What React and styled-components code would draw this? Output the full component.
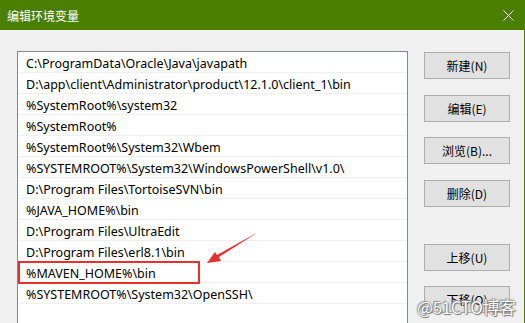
import React from 'react';
import styled, {createGlobalStyle} from 'styled-components';

const GlobalStyle = createGlobalStyle`
  html, body {
    margin: 0;
    padding: 0;
    overflow: hidden;
    background: #f0f0f0;
  }
`;

const Window = styled.div`
  width: 525px;
  height: 323px;
  display: flex;
  flex-direction: column;
  font-family: "Noto Sans", "Noto Sans CJK SC", sans-serif;
  position: relative;
  overflow: hidden;
`;

const TitleBar = styled.div`
  height: 30px;
  flex: none;
  background: #4a7f02;
  display: flex;
  align-items: center;
  justify-content: space-between;
  padding: 0 11px 0 7px;
  color: #ffffff;
  font-family: "Noto Sans CJK SC", sans-serif;
  font-size: 12px;
`;

const CloseButton = styled.div`
  width: 12px;
  height: 12px;
  display: flex;
  align-items: center;
  justify-content: center;
`;

const Body = styled.div`
  flex: 1;
  display: flex;
  align-items: flex-start;
  padding: 21px 0 0 17px;
  background: #f0f0f0;
  border-right: 1px solid #4a7f02;
`;

const ListBox = styled.div`
  width: 389px;
  height: 300px;
  background: #ffffff;
  border: 1px solid #828790;
  border-bottom: none;
  flex: none;
`;

const Row = styled.div`
  position: relative;
  border-bottom: 1px solid #f0f0f0;
  padding-left: 8px;
  display: flex;
  align-items: center;
  padding-top: 2px;
  box-sizing: border-box;
  height: 21px;
  font-size: 12.5px;
  color: #000000;
  white-space: nowrap;
`;

const Marker = styled.div`
  position: absolute;
  left: 0;
  top: -1px;
  width: 182px;
  height: 23px;
  border: 2px solid #e8302c;
  box-sizing: border-box;
`;

const ButtonColumn = styled.div`
  display: flex;
  flex-direction: column;
  margin-left: 16px;
  padding-top: 1px;
`;

const Button = styled.div`
  width: 86px;
  height: 27px;
  box-sizing: border-box;
  margin-top: ${(p) => p.$gap}px;
  background: #e1e1e1;
  border: 1px solid #adadad;
  display: flex;
  align-items: center;
  justify-content: center;
  font-family: "Noto Sans CJK SC", sans-serif;
  font-size: 12px;
  color: #000000;
`;

const Arrow = styled.svg`
  position: absolute;
  left: 200px;
  top: 228px;
`;

const Watermark = styled.div`
  position: absolute;
  left: 417px;
  top: 294px;
  font-family: "Noto Sans CJK SC", sans-serif;
  font-size: 17px;
  color: #ffffff;
  text-shadow: 0 0 1px #555, 1px 1px 1px #777, -1px -1px 1px #999;
  letter-spacing: -0.4px;
`;

const paths = [
  'C:\\ProgramData\\Oracle\\Java\\javapath',
  'D:\\app\\client\\Administrator\\product\\12.1.0\\client_1\\bin',
  '%SystemRoot%\\system32',
  '%SystemRoot%',
  '%SystemRoot%\\System32\\Wbem',
  '%SYSTEMROOT%\\System32\\WindowsPowerShell\\v1.0\\',
  'D:\\Program Files\\TortoiseSVN\\bin',
  '%JAVA_HOME%\\bin',
  'D:\\Program Files\\UltraEdit',
  'D:\\Program Files\\erl8.1\\bin',
  '%MAVEN_HOME%\\bin',
  '%SYSTEMROOT%\\System32\\OpenSSH\\',
];

const buttons = [
  {label: '新建(N)', gap: 0},
  {label: '编辑(E)', gap: 16},
  {label: '浏览(B)...', gap: 15},
  {label: '删除(D)', gap: 16},
  {label: '上移(U)', gap: 37},
  {label: '下移(O)', gap: 15},
];

export default function App() {
  return (
    <Window>
      <GlobalStyle />
      <TitleBar>
        <span>编辑环境变量</span>
        <CloseButton>
          <svg width="11" height="11" viewBox="0 0 11 11">
            <path d="M0.5 0.5 L10.5 10.5 M10.5 0.5 L0.5 10.5" stroke="#ffffff" strokeWidth="1" />
          </svg>
        </CloseButton>
      </TitleBar>
      <Body>
        <ListBox>
          {paths.map((text, index) => (
            <Row key={'path' + index}>
              {text}
              {text === '%MAVEN_HOME%\\bin' && <Marker />}
            </Row>
          ))}
        </ListBox>
        <ButtonColumn>
          {buttons.map((b) => (
            <Button key={b.label} $gap={b.gap}>{b.label}</Button>
          ))}
        </ButtonColumn>
      </Body>
      <Arrow width="62" height="40" viewBox="0 0 62 40">
        <path d="M57.5 4.5 L19 29 L21 33 L7 35 L15 24 L17 27 Z" fill="#e8302c" />
      </Arrow>
      <Watermark>@51CTO博客</Watermark>
    </Window>
  );
}
